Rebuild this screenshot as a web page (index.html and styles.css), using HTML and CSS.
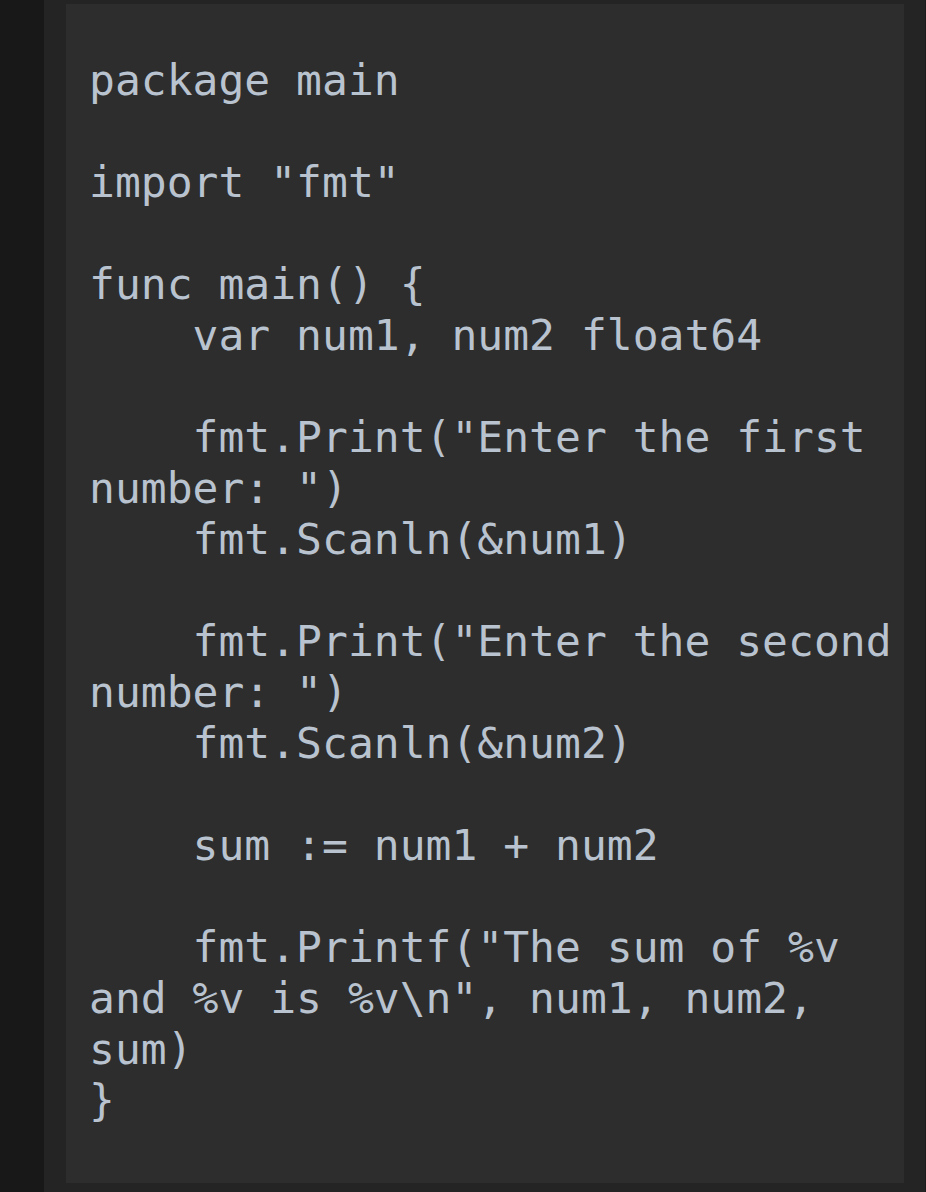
FILE: index.html
```html
<!DOCTYPE html>
<html>
<head>
<meta charset="utf-8">
<link rel="stylesheet" href="styles.css">
</head>
<body>
<div class="page">
  <div class="rail"></div>
  <div class="panel">
    <pre class="code">package main

import "fmt"

func main() {
    var num1, num2 float64

    fmt.Print("Enter the first number: ")
    fmt.Scanln(&amp;num1)

    fmt.Print("Enter the second number: ")
    fmt.Scanln(&amp;num2)

    sum := num1 + num2

    fmt.Printf("The sum of %v and %v is %v\n", num1, num2, sum)
}</pre>
  </div>
  <div class="edge"></div>
</div>
</body>
</html>
```
FILE: styles.css
```css
html, body {
  margin: 0;
  padding: 0;
  background: #242424;
}
.page {
  display: flex;
  width: 926px;
  height: 1192px;
}
.rail {
  width: 44px;
  flex: none;
  background: #181818;
}
.panel {
  flex: 1;
  background: #242424;
  padding: 4px 0 9px 22px;
  display: flex;
}
.edge {
  width: 1px;
  flex: none;
  background: #1c1c1c;
}
.code {
  margin: 0;
  width: 815px;
  padding: 51px 0 61px 23px;
  background: #2d2d2d;
  color: #b9c3cf;
  font-family: "DejaVu Sans Mono", "Liberation Mono", monospace;
  font-size: 43px;
  line-height: 51px;
  white-space: pre-wrap;
  overflow-wrap: break-word;
  box-sizing: content-box;
}
```
